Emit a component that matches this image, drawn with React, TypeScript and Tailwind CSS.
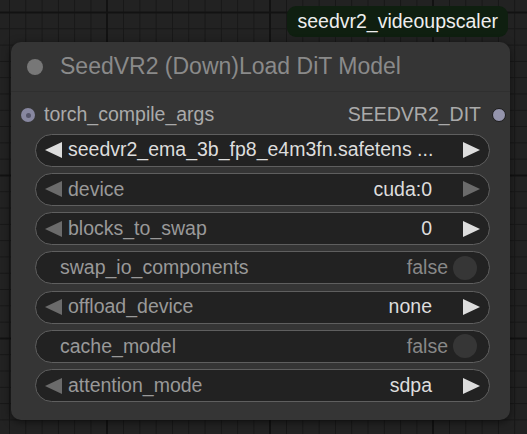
const LeftArrow = ({ dim }: { dim?: boolean }) => (
  <svg width="17" height="16" viewBox="0 0 17 16" className="shrink-0">
    <polygon points="17,0 17,16 0,8" fill={dim ? "#6b6b6b" : "#dddddd"} />
  </svg>
);

const RightArrow = ({ dim }: { dim?: boolean }) => (
  <svg width="17" height="16" viewBox="0 0 17 16" className="shrink-0">
    <polygon points="0,0 0,16 17,8" fill={dim ? "#6b6b6b" : "#dddddd"} />
  </svg>
);

const Pill = ({ children }: { children: React.ReactNode }) => (
  <div className="ml-6 flex h-[33px] w-[455px] items-center rounded-full border border-[#5f5f5f] bg-[#222222] text-[19.5px] leading-none">
    {children}
  </div>
);

const Combo = ({
  label,
  value,
  leftDim,
  rightDim,
}: {
  label: string;
  value: string;
  leftDim?: boolean;
  rightDim?: boolean;
}) => (
  <Pill>
    <div className="ml-[9px]">
      <LeftArrow dim={leftDim} />
    </div>
    <span className="ml-[6px] text-[#999999]">{label}</span>
    <span className="ml-auto text-[#dddddd]">{value}</span>
    <div className="ml-[31px] mr-[9px]">
      <RightArrow dim={rightDim} />
    </div>
  </Pill>
);

const Toggle = ({ label }: { label: string }) => (
  <Pill>
    <span className="ml-6 text-[#999999]">{label}</span>
    <span className="ml-auto text-[#888888]">false</span>
    <div className="ml-[5px] mr-3 size-[24px] shrink-0 rounded-full bg-[#363636]"></div>
  </Pill>
);

export default function App() {
  return (
    <div
      className="relative h-[434px] w-[527px] overflow-hidden bg-[#222222] bg-[linear-gradient(to_right,#121212_2px,transparent_2px),linear-gradient(to_bottom,#121212_2px,transparent_2px),linear-gradient(to_right,#171717_1px,transparent_1px),linear-gradient(to_bottom,#171717_1px,transparent_1px)] [background-position:106px_11.5px,106px_11.5px,9px_12px,9px_12px] [background-size:163px_163px,163px_163px,16.3px_16.3px,16.3px_16.3px]"
      style={{ fontFamily: '"Liberation Sans", Arial, sans-serif' }}
    >
      {/* group badge */}
      <div className="absolute right-[19px] top-[6px] flex h-[31px] items-center rounded-[9px] bg-[#0f1f10] px-[10px] text-[19.5px] leading-none text-[#eeeeee]">
        seedvr2_videoupscaler
      </div>

      {/* node */}
      <div className="absolute left-[11px] top-[42px] flex h-[378px] w-[499px] flex-col rounded-[10px] bg-[#353535] shadow-[0_2px_8px_rgba(0,0,0,0.55)]">
        <div className="flex h-[50px] items-center border-b border-[#2f2f2f] pl-4">
          <div className="size-4 shrink-0 rounded-full bg-[#777777]"></div>
          <span className="ml-[17px] text-[23px] leading-none text-[#8a8a8a]">
            SeedVR2 (Down)Load DiT Model
          </span>
        </div>

        <div className="mt-[11px] flex h-[24px] items-center pl-[10px] pr-[4px] text-[19.5px] leading-none text-[#aaaaaa]">
          <div className="flex h-[14px] w-[14px] min-w-[14px] items-center justify-center rounded-full bg-[#8787a0]">
            <div className="h-[5px] w-[5px] rounded-full bg-[#55556a]"></div>
          </div>
          <span className="ml-[9px]">torch_compile_args</span>
          <span className="ml-auto">SEEDVR2_DIT</span>
          <div className="ml-[11px] h-[14px] w-[14px] min-w-[14px] rounded-full border border-[#1c1c1c] bg-[#9494ac]"></div>
        </div>

        <div className="mt-[6.5px] flex flex-col gap-[6.3px]">
          <Pill>
            <div className="ml-[9px]">
              <LeftArrow />
            </div>
            <span className="ml-[6px] text-[#dddddd]">seedvr2_ema_3b_fp8_e4m3fn.safetens ...</span>
            <div className="ml-auto mr-[9px]">
              <RightArrow />
            </div>
          </Pill>
          <Combo label="device" value="cuda:0" leftDim rightDim />
          <Combo label="blocks_to_swap" value="0" leftDim />
          <Toggle label="swap_io_components" />
          <Combo label="offload_device" value="none" leftDim />
          <Toggle label="cache_model" />
          <Combo label="attention_mode" value="sdpa" leftDim />
        </div>
      </div>
    </div>
  );
}
